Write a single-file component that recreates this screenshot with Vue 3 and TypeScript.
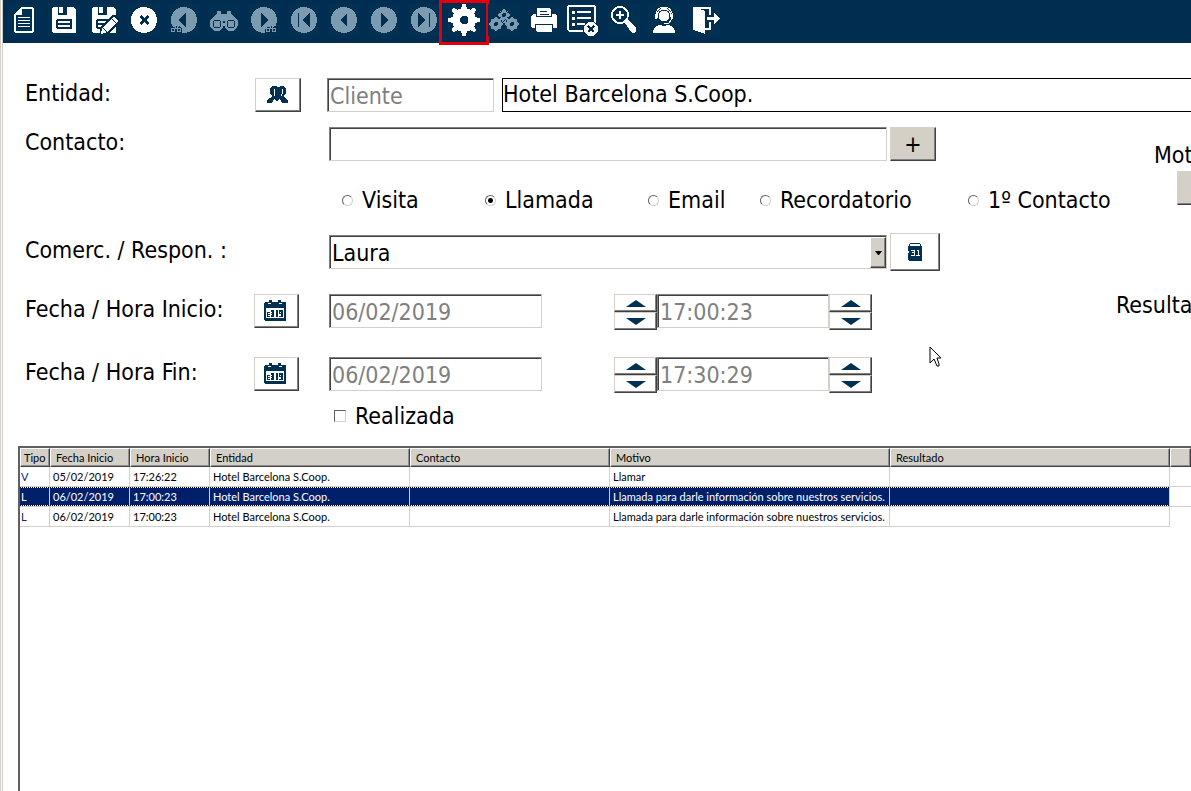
<script setup lang="ts">
import { ref } from 'vue'

interface Shape {
  d: string
  bg?: boolean
  line?: number
}
interface Tool {
  label: string
  dim?: boolean
  marked?: boolean
  shapes: Shape[]
}

const disc = (cx: number, cy: number, r: number): string =>
  `M${cx - r} ${cy}a${r} ${r} 0 1 0 ${2 * r} 0a${r} ${r} 0 1 0 ${-2 * r} 0z`

const gear = (cx: number, cy: number, outer: number, inner: number, teeth: number): string => {
  const step = (Math.PI * 2) / teeth
  const points: string[] = []
  for (let i = 0; i < teeth; i++) {
    const mid = i * step - Math.PI / 2
    const corners: [number, number][] = [
      [inner, -0.3], [outer - 2, -0.2], [outer, -0.13], [outer, 0.13], [outer - 2, 0.2], [inner, 0.3],
    ]
    for (const [r, t] of corners) {
      const a = mid + t * step
      points.push(`${(cx + r * Math.cos(a)).toFixed(2)} ${(cy + r * Math.sin(a)).toFixed(2)}`)
    }
  }
  return `M${points.join('L')}z`
}

const smallBinoculars = (x: number): Shape[] => [
  { d: `M${x - 1} 29v-4l3-3h6l3 3v4z`, bg: true },
  { d: `${disc(x + 2, 26, 2)}${disc(x + 8, 26, 2)}M${x + 2} 22h2v2h2v-2h2`, line: 1 },
]
const round: Shape = { d: disc(16, 16, 13) }

const floppy: Shape[] = [
  { d: 'M5 3h20l3 3v22l-1 1H5l-1-1V4z' },
  { d: 'M10 3h9v8h-9z', bg: true },
  { d: 'M11 3h4v6h-4z' },
  { d: 'M9 15h14l1 1v8l-1 1H9l-1-1v-8z', bg: true },
  { d: 'M10 17h12v2H10zM10 21h12v2H10z' },
]

const tools: Tool[] = [
  {
    label: 'Nuevo',
    shapes: [
      { d: 'M14 4h9q2 0 2 2v20q0 2-2 2H9q-2 0-2-2V11z', line: 2 },
      { d: 'M7 11l7-7v7z' },
      { d: 'M10 13h12v1H10zM10 16h12v1H10zM10 19h12v1H10zM10 22h12v1H10z' },
    ],
  },
  { label: 'Guardar', shapes: floppy },
  {
    label: 'Guardar y editar',
    shapes: [
      ...floppy,
      { d: 'M11 32l2-10L25 11h3l4 5v2L21 29z', bg: true },
      { d: 'M13 30l1-6L26 13l4 4-11 11z' },
      { d: 'M15 24l4 4M24 15l4 4', bg: true, line: 1 },
    ],
  },
  {
    label: 'Cancelar',
    shapes: [round, { d: 'M11 13l2-2 3 3 3-3 2 2-3 3 3 3-2 2-3-3-3 3-2-2 3-3z', bg: true }],
  },
  {
    label: 'Buscar anterior',
    dim: true,
    shapes: [round, { d: 'M10 16l8-7v14z', bg: true }, ...smallBinoculars(3)],
  },
  {
    label: 'Buscar',
    dim: true,
    shapes: [
      { d: 'M2 17l7-8V7h4v3h6V7h4v2l7 8v5H2z' },
      { d: `${disc(9, 20, 7)}${disc(23, 20, 7)}` },
      { d: `${disc(9, 20, 4)}${disc(23, 20, 4)}`, bg: true, line: 1 },
      { d: 'M15 22h2v6h-2zM15 17h2v2h-2z', bg: true },
    ],
  },
  {
    label: 'Buscar siguiente',
    dim: true,
    shapes: [round, { d: 'M21 16l-8-7v14z', bg: true }, ...smallBinoculars(18)],
  },
  { label: 'Primero', dim: true, shapes: [round, { d: 'M10 9h1v14h-1zM14 16l8-7v14z', bg: true }] },
  { label: 'Anterior', dim: true, shapes: [round, { d: 'M12 16l7-7v14z', bg: true }] },
  { label: 'Siguiente', dim: true, shapes: [round, { d: 'M20 16l-7-7v14z', bg: true }] },
  { label: 'Último', dim: true, shapes: [round, { d: 'M21 9h1v14h-1zM18 16l-8-7v14z', bg: true }] },
  {
    label: 'Opciones',
    marked: true,
    shapes: [{ d: gear(16, 16, 16, 12, 8) }, { d: 'M14 12h4l2 2v4l-2 2h-4l-2-2v-4z', bg: true }],
  },
  {
    label: 'Procesos',
    dim: true,
    shapes: [
      { d: `${gear(16, 11, 6, 5, 8)}${gear(8, 20, 7, 6, 8)}${gear(24, 20, 7, 6, 8)}` },
      { d: `${disc(16, 11, 2)}${disc(8, 20, 2)}${disc(24, 20, 2)}`, bg: true },
      { d: gear(16, 17, 4, 3, 8) },
      { d: 'M14 19l4-4', bg: true, line: 1 },
    ],
  },
  {
    label: 'Imprimir',
    shapes: [
      { d: 'M3 12l2-2h22l2 2v11l-1 1H4l-1-1z' },
      { d: 'M8 3h14l2 2v8H8z', bg: true },
      { d: 'M9 4h12l2 2v6H9z' },
      { d: 'M12 7h7v1h-7zM12 10h9v1h-9z', bg: true },
      { d: 'M7 20h18v9H7z', bg: true },
      { d: 'M8 21h16v6l-1 1H9l-1-1z' },
    ],
  },
  {
    label: 'Lista',
    shapes: [
      { d: 'M2 2h23q2 0 2 2v20q0 3-3 3H3q-3 0-3-3V4q0-2 2-2z', line: 2 },
      { d: 'M4 7h3v3H4zM4 13h3v3H4zM4 19h3v3H4zM9 7h14v2H9zM9 13h14v2H9zM9 19h9v2H9z' },
      { d: disc(23, 25, 8), bg: true },
      { d: disc(23, 25, 7) },
      { d: 'M20 22l6 6M26 22l-6 6', bg: true, line: 2 },
    ],
  },
  {
    label: 'Ampliar',
    shapes: [
      { d: disc(12, 11, 8), line: 2 },
      { d: 'M12 7v8M8 11h8', line: 2 },
      { d: 'M16 18l3-3 9 9v4l-2 1h-2z' },
    ],
  },
  {
    label: 'Soporte',
    shapes: [
      { d: disc(16, 11, 7) },
      { d: disc(16, 12, 6), bg: true, line: 1 },
      { d: 'M8 13V9q2-6 8-6t8 6v4', line: 1 },
      { d: 'M7 10h2v5H7zM23 10h2v5h-2z' },
      { d: 'M24 15l-3 4h-5', line: 1 },
      { d: 'M5 29q0-7 7-8l4 1 4-1q7 1 7 8z' },
    ],
  },
  {
    label: 'Salir',
    shapes: [
      { d: 'M6 4h16v7M22 18v7h-5', line: 2 },
      { d: 'M5 3l12 4v23L5 26z' },
      { d: 'M19 13h7V9l6 5-6 6v-4h-7z' },
    ],
  },
]

const kinds = ['Visita', 'Llamada', 'Email', 'Recordatorio', '1º Contacto']
const kind = ref('Llamada')
const entityType = ref('Cliente')
const entityName = ref('Hotel Barcelona S.Coop.')
const contact = ref('')
const owner = ref('Laura')
const done = ref(false)

const periods = ref([
  { id: 'inicio', label: 'Fecha / Hora Inicio:', date: '06/02/2019', time: '17:00:23' },
  { id: 'fin', label: 'Fecha / Hora Fin:', date: '06/02/2019', time: '17:30:29' },
])

const headings = ['Tipo', 'Fecha Inicio', 'Hora Inicio', 'Entidad', 'Contacto', 'Motivo', 'Resultado', '']
const selected = ref(1)
const rows: string[][] = [
  ['V', '05/02/2019', '17:26:22', 'Hotel Barcelona S.Coop.', '', 'Llamar', '', ''],
  ['L', '06/02/2019', '17:00:23', 'Hotel Barcelona S.Coop.', '', 'Llamada para darle información sobre nuestros servicios.', '', ''],
  ['L', '06/02/2019', '17:00:23', 'Hotel Barcelona S.Coop.', '', 'Llamada para darle información sobre nuestros servicios.', '', ''],
]
</script>

<template>
  <div class="window">
    <header class="toolbar">
      <button
        v-for="tool in tools"
        :key="tool.label"
        type="button"
        class="tool"
        :class="{ dim: tool.dim, marked: tool.marked }"
        :aria-label="tool.label"
      >
        <svg viewBox="0 0 32 32" width="32" height="32" aria-hidden="true">
          <path
            v-for="(shape, i) in tool.shapes"
            :key="i"
            :d="shape.d"
            :class="[shape.line ? 'stroke' : 'fill', { back: shape.bg }]"
            :stroke-width="shape.line"
          />
        </svg>
      </button>
    </header>

    <form class="form" @submit.prevent>
      <div class="row entity">
        <label for="entity-name">Entidad:</label>
        <button type="button" class="push" aria-label="Elegir entidad">
          <svg viewBox="0 0 22 18" width="22" height="18" aria-hidden="true">
            <path d="M5 0h3l3 1 3-1h3l2 3v4l-2 3v1l4 3v3h-6l-2-4h-1l-1 2h-2l-1-2H7l-2 4H0v-3l5-3v-1L3 7V3z" />
            <path class="gap" d="M7 3v5l1 2M15 3v5l-1 2" />
          </svg>
        </button>
        <input v-model="entityType" class="sunken" aria-label="Tipo de entidad" disabled />
        <input id="entity-name" v-model="entityName" class="flat" />
      </div>

      <div class="body">
        <div class="main">
          <div class="row">
            <label for="contact">Contacto:</label>
            <div class="pair">
              <input id="contact" v-model="contact" class="sunken" />
              <button type="button" class="push grey" aria-label="Añadir contacto">+</button>
            </div>
          </div>

          <div class="kinds" role="radiogroup" aria-label="Tipo">
            <label v-for="k in kinds" :key="k">
              <input v-model="kind" type="radio" name="kind" :value="k" />{{ k }}
            </label>
          </div>

          <div class="row">
            <label for="owner">Comerc. / Respon. :</label>
            <div class="pair">
              <div class="combo">
                <select id="owner" v-model="owner" class="sunken">
                  <option>Laura</option>
                </select>
                <span class="arrow" aria-hidden="true">
                  <svg viewBox="0 0 7 4" width="7" height="4"><path d="M0 0h7L4 4H3z" /></svg>
                </span>
              </div>
              <button type="button" class="push wide" aria-label="Agenda">
                <svg viewBox="0 0 16 20" width="16" height="20" aria-hidden="true">
                  <path d="M3 1h10v1H3zM2 2h1v2H2zM13 2h1v2h-1zM1 4h14v5l-1 1 1 1v7l-1 1H2l-1-1v-7l1-1-1-1z" />
                  <path class="hole" d="M4 8h4v6H4v-1h3v-2H5v-1h2V9H4zM10 8h2v5h1v1H9v-1h2V9h-1z" />
                </svg>
              </button>
            </div>
          </div>

          <div v-for="p in periods" :key="p.id" class="row period">
            <label :for="p.id">{{ p.label }}</label>
            <button type="button" class="push" aria-label="Calendario">
              <svg viewBox="0 0 22 21" width="22" height="21" aria-hidden="true">
                <path d="M4 2h1V0h3v2h6V0h3v2h4l1 1v17l-1 1H1l-1-1V3l1-1z" />
                <path class="hole" d="M2 8h18v10H2zM4 3h3v1H4zM15 3h3v1h-3z" />
                <path d="M3 12h3v5H3zM7 10h3v7H7zM12 10h2v7h-2zM15 10h4v7h-4z" />
                <path class="hole" d="M4 13h2v1H4zM4 15h2v1H4zM7 12h1v1H7zM7 14h1v1H7zM16 12h1v1h-1zM15 14h2v2h-2z" />
              </svg>
            </button>
            <div class="when">
              <input :id="p.id" v-model="p.date" class="sunken date" disabled />
              <div class="spinner">
                <button type="button" aria-label="Hora más"><i class="up"></i></button>
                <button type="button" aria-label="Hora menos"><i class="down"></i></button>
              </div>
              <input v-model="p.time" class="sunken time" aria-label="Hora" disabled />
              <div class="spinner">
                <button type="button" aria-label="Minuto más"><i class="up"></i></button>
                <button type="button" aria-label="Minuto menos"><i class="down"></i></button>
              </div>
            </div>
          </div>

          <label class="done"><input v-model="done" type="checkbox" />Realizada</label>
        </div>

        <aside class="side">
          <span class="reason">Motivo:</span>
          <button type="button" class="push grey" aria-label="Elegir motivo"></button>
          <span class="result">Resultado:</span>
        </aside>
      </div>
    </form>

    <div class="grid">
      <table>
        <colgroup>
          <col v-for="(h, i) in headings" :key="i" :class="'c' + i" />
        </colgroup>
        <thead>
          <tr>
            <th v-for="(h, i) in headings" :key="i" scope="col">{{ h }}</th>
          </tr>
        </thead>
        <tbody>
          <tr v-for="(row, r) in rows" :key="r" :class="{ selected: r === selected }" @click="selected = r">
            <td v-for="(cell, c) in row" :key="c">{{ cell }}</td>
          </tr>
        </tbody>
      </table>
    </div>

    <svg class="pointer" viewBox="0 0 13 22" width="13" height="22" aria-hidden="true">
      <path d="M1 1v16l4-4 3 7h2v-2l-2-6h4z" />
    </svg>
  </div>
</template>

<style>
body {
  margin: 0;
  background: #fff;
}
</style>

<style scoped>
.window {
  --navy: #002d50;
  --face: #d4d0c8;
  position: relative;
  box-sizing: border-box;
  display: flex;
  flex-direction: column;
  min-height: 100vh;
  overflow: hidden;
  border-left: 3px double var(--face);
  background: #fff;
  color: #000;
  font-family: "DejaVu Sans Condensed", "DejaVu Sans", sans-serif;
  font-size: 23px;
  line-height: 28px;
}
button,
input,
select {
  box-sizing: border-box;
  margin: 0;
  padding: 0;
  border-radius: 0;
  font: inherit;
  color: inherit;
}
.toolbar {
  display: flex;
  height: 43px;
  padding-left: 1px;
  background: var(--navy);
}
.tool {
  position: relative;
  flex: none;
  width: 40px;
  height: 40px;
  padding: 4px;
  border: 0;
  background: none;
  color: #fff;
}
.tool svg {
  display: block;
  overflow: visible;
  background: #003052;
  shape-rendering: crispEdges;
}
.tool.dim {
  color: #7b9bb0;
}
.tool.marked::after {
  content: "";
  position: absolute;
  inset: 0 -5px -5px;
  border: 3px solid #e00010;
}
.fill {
  fill: currentColor;
}
.fill.back {
  fill: var(--navy);
}
.stroke {
  fill: none;
  stroke: currentColor;
}
.stroke.back {
  stroke: var(--navy);
}
.form {
  padding: 35px 0 16px 22px;
}
.row {
  display: grid;
  grid-template-columns: 229px 75px 1fr;
  align-items: center;
}
.row > label {
  padding-bottom: 4px;
}
.entity {
  grid-template-columns: 230px 72px 167px 1fr;
  height: 34px;
}
.flat {
  min-width: 0;
  height: 34px;
  margin-left: 8px;
  padding-bottom: 2px;
  border: 1px solid #000;
  border-right: 0;
  background: #fff;
}
.sunken {
  min-width: 0;
  width: 100%;
  height: 34px;
  padding: 2px 2px 0;
  border: 1px solid;
  border-color: #808080 var(--face) var(--face) #808080;
  background: #fff;
  box-shadow: inset 1px 1px #404040;
}
.sunken:disabled {
  color: #808080;
  opacity: 1;
}
.push {
  display: flex;
  align-items: center;
  justify-content: center;
  width: 46px;
  height: 34px;
  border: 1px solid;
  border-color: var(--face) #404040 #404040 var(--face);
  background: #fff;
  box-shadow: inset -1px -1px #808080;
  color: #003052;
}
.push.grey {
  background: var(--face);
  color: #000;
}
.push.wide {
  width: 50px;
  height: 38px;
}
.push svg {
  fill: currentColor;
  shape-rendering: crispEdges;
}
.push .gap {
  fill: none;
  stroke: #fff;
}
.push .hole {
  fill: #fff;
}
.body {
  display: flex;
  padding-top: 15px;
}
.main {
  flex: 1;
  min-width: 0;
}
.pair {
  display: grid;
  grid-column: 3;
  grid-template-columns: 1fr 51px;
  align-items: center;
  column-gap: 3px;
  padding-right: 175px;
}
.kinds {
  display: grid;
  grid-template-columns: 143px 163px 112px 208px auto;
  margin: 25px 0 19px 317px;
}
.kinds label,
.done {
  display: flex;
  align-items: center;
  white-space: nowrap;
}
.kinds input {
  appearance: none;
  width: 11px;
  height: 11px;
  margin-right: 9px;
  border: 1px solid;
  border-color: #606060 var(--face) var(--face) #606060;
  border-radius: 50%;
  background: #fff;
}
.kinds input:checked {
  background: radial-gradient(circle, #000 2px, #fff 3px);
}
.combo {
  position: relative;
  display: flex;
}
.combo .sunken {
  appearance: none;
}
.arrow {
  position: absolute;
  inset: 2px 1px 1px auto;
  display: flex;
  align-items: center;
  justify-content: center;
  box-sizing: border-box;
  width: 16px;
  border: 1px solid;
  border-color: #fff #404040 #404040 #fff;
  background: var(--face);
  box-shadow: inset -1px -1px #808080;
  pointer-events: none;
}
.period {
  height: 37px;
  margin-top: 21px;
}
.period .push {
  width: 45px;
  padding: 0 3px 2px 0;
}
.period + .period {
  margin-top: 26px;
}
.when {
  display: flex;
  align-items: center;
}
.date {
  width: 213px;
  margin-right: 72px;
}
.time {
  width: 172px;
}
.spinner {
  display: grid;
  width: 43px;
  padding-top: 2px;
}
.spinner button {
  display: flex;
  align-items: center;
  justify-content: center;
  height: 18px;
  border: 1px solid;
  border-color: var(--face) #404040 #404040 var(--face);
  background: #fff;
  box-shadow: inset -1px -1px #808080;
}
.up,
.down {
  border: 0 solid transparent;
  border-width: 0 10px;
}
.up {
  border-bottom: 7px solid #003052;
}
.down {
  border-top: 7px solid #003052;
}
.done {
  width: max-content;
  margin: 10px 0 0 309px;
}
.done input {
  appearance: none;
  width: 12px;
  height: 12px;
  margin-right: 9px;
  border: 1px solid;
  border-color: #606060 var(--face) var(--face) #606060;
  background: #fff;
}
.done input:checked {
  background: #000;
}
.side {
  display: flex;
  flex-direction: column;
  width: 75px;
  padding-top: 14px;
  overflow: hidden;
  white-space: nowrap;
}
.reason {
  margin-left: 38px;
}
.side .push {
  flex: none;
  margin: 2px 0 0 61px;
}
.result {
  margin-top: 86px;
}
.grid {
  flex: 1;
  margin-left: 15px;
  border: solid #606060;
  border-width: 2px 0 0 2px;
  font-family: Lato, "DejaVu Sans Condensed", sans-serif;
  font-size: 11px;
  line-height: 14px;
}
table {
  width: 100%;
  table-layout: fixed;
  border-spacing: 0;
}
.c0 {
  width: 30px;
}
.c1,
.c2 {
  width: 80px;
}
.c3,
.c4 {
  width: 200px;
}
.c5,
.c6 {
  width: 280px;
}
th {
  height: 19px;
  box-sizing: border-box;
  padding: 0 0 0 5px;
  border: 1px solid;
  border-color: #fff #404040 #404040 #fff;
  background: var(--face);
  box-shadow: inset -1px -1px #909090;
  font-weight: normal;
  text-align: left;
  white-space: nowrap;
}
th:first-child {
  padding-left: 3px;
}
td {
  height: 20px;
  box-sizing: border-box;
  padding: 0 0 0 3px;
  border: solid var(--face);
  border-width: 0 1px 1px 0;
  white-space: nowrap;
}
td:first-child {
  padding-left: 1px;
  color: #202060;
}
td:last-child {
  border-right: 0;
}
tr:last-child td:last-child {
  border-bottom: 0;
}
.selected td:not(:last-child) {
  background:
    repeating-linear-gradient(90deg, #000 0 1px, #fff 1px 2px) top / 100% 1px no-repeat,
    repeating-linear-gradient(90deg, #000 0 1px, #fff 1px 2px) bottom / 100% 1px no-repeat,
    #001f6b;
  background-clip: padding-box;
  color: #fff;
}
.pointer {
  position: absolute;
  left: 926px;
  top: 346px;
  fill: #fff;
  stroke: #000;
  pointer-events: none;
}
</style>
